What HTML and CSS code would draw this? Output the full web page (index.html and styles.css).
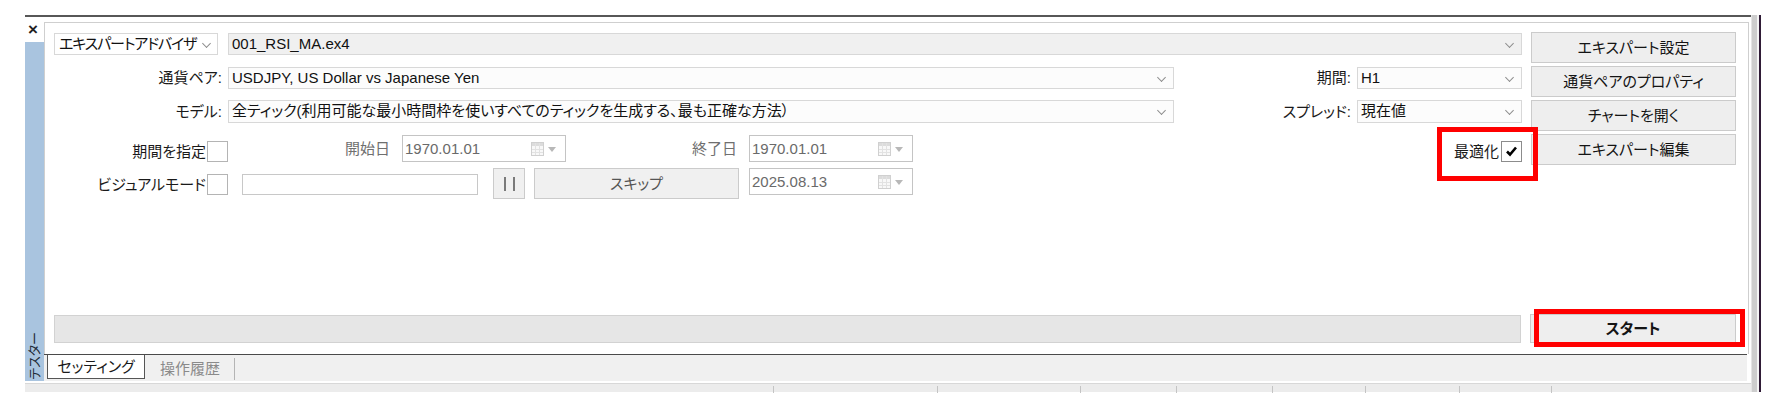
FILE: index.html
```html
<html>
    <head>
        <link rel="stylesheet" href="styles.css">
    </head>
    <body>
        <div class="window">
            <div class="body">
                <div class="top">
                    <div class="side">
                        <div class="close">×</div>
                        <div class="side-tab"><span>テスター</span></div>
                    </div>
                    <div class="panel">
                        <div class="sheet">
                            <div class="form">
                                <div class="fields">
                                    <div class="row row1">
                                        <div class="select ea">エキスパートアドバイザ<i class="chev"></i></div>
                                        <div class="select combo">001_RSI_MA.ex4<i class="chev"></i></div>
                                    </div>
                                    <div class="row row2">
                                        <div class="label wide">通貨ペア:</div>
                                        <div class="select pair">USDJPY, US Dollar vs Japanese Yen<i class="chev"></i></div>
                                        <div class="label fill">期間:</div>
                                        <div class="select small">H1<i class="chev"></i></div>
                                    </div>
                                    <div class="row row3">
                                        <div class="label wide">モデル:</div>
                                        <div class="select pair">全ティック(利用可能な最小時間枠を使いすべてのティックを生成する、最も正確な方法）<i class="chev"></i></div>
                                        <div class="label fill">スプレッド:</div>
                                        <div class="select small">現在値<i class="chev"></i></div>
                                    </div>
                                    <div class="row row4">
                                        <div class="label check-label">期間を指定</div>
                                        <div class="checkbox"></div>
                                        <div class="label dim from">開始日</div>
                                        <div class="date">1970.01.01<i class="cal"></i><i class="tri"></i></div>
                                        <div class="label dim to">終了日</div>
                                        <div class="date">1970.01.01<i class="cal"></i><i class="tri"></i></div>
                                        <div class="opt">
                                            <div class="label">最適化</div>
                                            <div class="checkbox checked">
                                                <svg width="19" height="19" viewBox="0 0 19 19"><path d="M5 9.5 L8 12.5 L14 5.5" fill="none" stroke="#000" stroke-width="2.6"/></svg>
                                            </div>
                                        </div>
                                    </div>
                                    <div class="row row5">
                                        <div class="label check-label">ビジュアルモード</div>
                                        <div class="checkbox"></div>
                                        <div class="text-input"></div>
                                        <div class="btn pause"><i></i><i></i></div>
                                        <div class="btn skip">スキップ</div>
                                        <div class="date">2025.08.13<i class="cal"></i><i class="tri"></i></div>
                                    </div>
                                </div>
                                <div class="buttons">
                                    <div class="btn">エキスパート設定</div>
                                    <div class="btn">通貨ペアのプロパティ</div>
                                    <div class="btn">チャートを開く</div>
                                    <div class="btn">エキスパート編集</div>
                                </div>
                            </div>
                            <div class="progress-row">
                                <div class="progress"></div>
                                <div class="btn start">スタート</div>
                            </div>
                        </div>
                        <div class="tabs">
                            <div class="tab active">セッティング</div>
                            <div class="tab">操作履歴</div>
                        </div>
                    </div>
                </div>
                <div class="status">
                    <i style="left: 748px"></i>
                    <i style="left: 912px"></i>
                    <i style="left: 1055px"></i>
                    <i style="left: 1151px"></i>
                    <i style="left: 1247px"></i>
                    <i style="left: 1340px"></i>
                    <i style="left: 1434px"></i>
                    <i style="left: 1526px"></i>
                </div>
            </div>
            <div class="edge"></div>
        </div>
    </body>
</html>
```

FILE: styles.css
```css
*, *::before, *::after {
    margin: 0;
    padding: 0;
    box-sizing: border-box;
}

body {
    background: #fff;
    font-family: "Liberation Sans", "Noto Sans CJK JP", sans-serif;
    font-size: 15px;
    color: #1a1a1a;
    font-feature-settings: "palt";
}

i {
    font-style: normal;
}

.window {
    display: flex;
    margin: 15px 0 0 25px;
    width: 1737px;
    height: 377px;
}

.body {
    width: 1726px;
    display: flex;
    flex-direction: column;
    border-top: 2px solid #575757;
}

.top {
    display: flex;
    height: 366px;
}

.side {
    width: 19px;
    display: flex;
    flex-direction: column;
}

.close {
    height: 25px;
    padding: 2px 0 0 3px;
    font-size: 17px;
    font-weight: bold;
    line-height: 22px;
    color: #222;
}

.side-tab {
    height: 339px;
    background: #a9c4df;
    display: flex;
    align-items: flex-end;
    justify-content: center;
}

.side-tab span {
    writing-mode: vertical-rl;
    text-orientation: sideways;
    transform: rotate(180deg);
    font-size: 13px;
    line-height: 18px;
    margin-bottom: 1px;
    color: #1e2a36;
}

.panel {
    flex: 1;
    padding-top: 5px;
    display: flex;
    flex-direction: column;
}

.sheet {
    height: 332px;
    margin-right: 2px;
    border: 1px solid #cfcfcf;
    border-bottom: none;
    padding: 9px 12px 0 9px;
    display: flex;
    flex-direction: column;
}

.form {
    display: flex;
    gap: 9px;
}

.fields {
    flex: 1;
    padding-top: 1px;
}

.row {
    display: flex;
    align-items: center;
}

.row1 { height: 22px; }
.row2 { height: 22px; margin-top: 12px; }
.row3 { height: 23px; margin-top: 11px; }
.row4 { height: 27px; margin-top: 12px; align-items: flex-end; }
.row5 { height: 31px; margin-top: 6px; align-items: flex-start; }

.label {
    white-space: nowrap;
    line-height: 20px;
}

.label.wide {
    width: 168px;
    margin-right: 6px;
    text-align: right;
}

.label.fill {
    flex: 1;
    margin-right: 6px;
    text-align: right;
}

.select {
    position: relative;
    height: 100%;
    border: 1px solid #d8d8d8;
    background: #fcfcfc;
    padding: 0 24px 0 3px;
    line-height: 20px;
    white-space: nowrap;
    color: #111;
}

.select.ea {
    width: 164px;
    margin-right: 10px;
    background: #fff;
    padding-left: 4px;
    letter-spacing: -1.1px;
}

.select.combo {
    flex: 1;
    background: #f0f0f0;
}

.select.pair {
    width: 946px;
}

.select.small {
    width: 165px;
}

.chev {
    position: absolute;
    right: 8px;
    top: 6px;
    width: 7px;
    height: 7px;
    border-right: 1px solid #8c8c8c;
    border-bottom: 1px solid #8c8c8c;
    transform: rotate(45deg) scale(0.9, 0.9);
}

.ea .chev {
    right: 7px;
}

.checkbox {
    width: 21px;
    height: 21px;
    border: 1px solid #b4b4b4;
    background: #fff;
    flex: none;
}

.checkbox.checked {
    border-color: #8c8c8c;
}

.checkbox svg {
    display: block;
}

.check-label {
    width: 152px;
    text-align: right;
    line-height: 21px;
    margin-right: 1px;
}

.row5 .check-label {
    margin-top: 6px;
}

.row4 .label.dim {
    align-self: center;
}

.dim {
    color: #6f6f6f;
    text-align: right;
}

.from {
    width: 162px;
    margin-right: 12px;
}

.to {
    width: 171px;
    margin-right: 12px;
}

.date {
    position: relative;
    width: 164px;
    height: 27px;
    border: 1px solid #c4c4c4;
    background: #fff;
    padding-left: 2px;
    line-height: 25px;
    color: #6a6a6a;
    flex: none;
}

.cal {
    position: absolute;
    right: 21px;
    top: 6px;
    width: 13px;
    height: 14px;
    border: 1px solid #d0d0d0;
    background:
        linear-gradient(90deg, transparent 3px, #e2e2e2 3px, #e2e2e2 4px, transparent 4px, transparent 7px, #e2e2e2 7px, #e2e2e2 8px, transparent 8px),
        linear-gradient(180deg, #dcdcdc 3px, transparent 3px, transparent 6px, #e2e2e2 6px, #e2e2e2 7px, transparent 7px, transparent 9px, #e2e2e2 9px, #e2e2e2 10px, transparent 10px);
    background-color: #f8f8f8;
}

.tri {
    position: absolute;
    right: 9px;
    top: 11px;
    border-left: 4px solid transparent;
    border-right: 4px solid transparent;
    border-top: 5px solid #b8b8b8;
}

.opt {
    position: relative;
    display: flex;
    align-items: center;
    margin-left: auto;
    gap: 2px;
}

.opt::after {
    content: "";
    position: absolute;
    left: -17px;
    top: -14px;
    width: 101px;
    height: 54px;
    border: 5px solid #ff0000;
    z-index: 2;
}

.row5 .checkbox {
    margin-top: 6px;
}

.text-input {
    width: 236px;
    height: 21px;
    margin: 6px 15px 0 14px;
    border: 1px solid #c8c8c8;
    background: #fff;
}

.btn {
    height: 31px;
    border: 1px solid #cbcbcb;
    background: #eeeeee;
    text-align: center;
    line-height: 29px;
    white-space: nowrap;
    color: #141414;
}

.pause {
    width: 32px;
    margin-right: 9px;
    display: flex;
    justify-content: center;
    align-items: center;
    gap: 7px;
    background: #f0f0f0;
}

.pause i {
    width: 2px;
    height: 14px;
    background: #7a7a7a;
}

.skip {
    width: 205px;
    margin-right: 10px;
    color: #555;
    background: #f0f0f0;
}

.buttons {
    width: 205px;
    display: flex;
    flex-direction: column;
    gap: 3px;
}

.progress-row {
    margin-top: auto;
    padding-bottom: 11px;
    display: flex;
    align-items: flex-end;
    gap: 9px;
}

.progress {
    flex: 1;
    height: 28px;
    background: #e6e6e6;
    border: 1px solid #d2d2d2;
}

.start {
    position: relative;
    width: 206px;
    height: 29px;
    font-weight: bold;
    line-height: 27px;
}

.start::after {
    content: "";
    position: absolute;
    left: 3px;
    top: -6px;
    width: 211px;
    height: 38px;
    border: 5px solid #ff0000;
}

.tabs {
    height: 27px;
    margin-right: 4px;
    border-top: 1px solid #4a4a4a;
    background: #f0f0f0;
    display: flex;
    align-items: flex-start;
}

.tab {
    font-size: 15px;
    line-height: 22px;
    color: #8a8a8a;
    padding: 0 14px 0 15px;
    margin-top: 3px;
    border-right: 1px solid #b4b4b4;
}

.tab.active {
    margin: 0 0 0 3px;
    width: 98px;
    height: 24px;
    padding: 1px 0 0;
    text-align: center;
    background: #fff;
    color: #1a1a1a;
    border: 1px solid #555;
    border-top: none;
}

.status {
    position: relative;
    height: 9px;
    background: #ececec;
    border-top: 1px solid #d8d8d8;
}

.status i {
    position: absolute;
    top: 2px;
    width: 1px;
    height: 7px;
    background: #c4c4c4;
}

.edge {
    width: 11px;
    height: 377px;
    background: linear-gradient(90deg, #e4e4e4 0, #e4e4e4 1px, #cdcdcd 1px, #cdcdcd 6px, #f4f4f4 6px, #f4f4f4 8px, #2f1b36 8px, #2f1b36 10px, #fff 10px);
}
```
